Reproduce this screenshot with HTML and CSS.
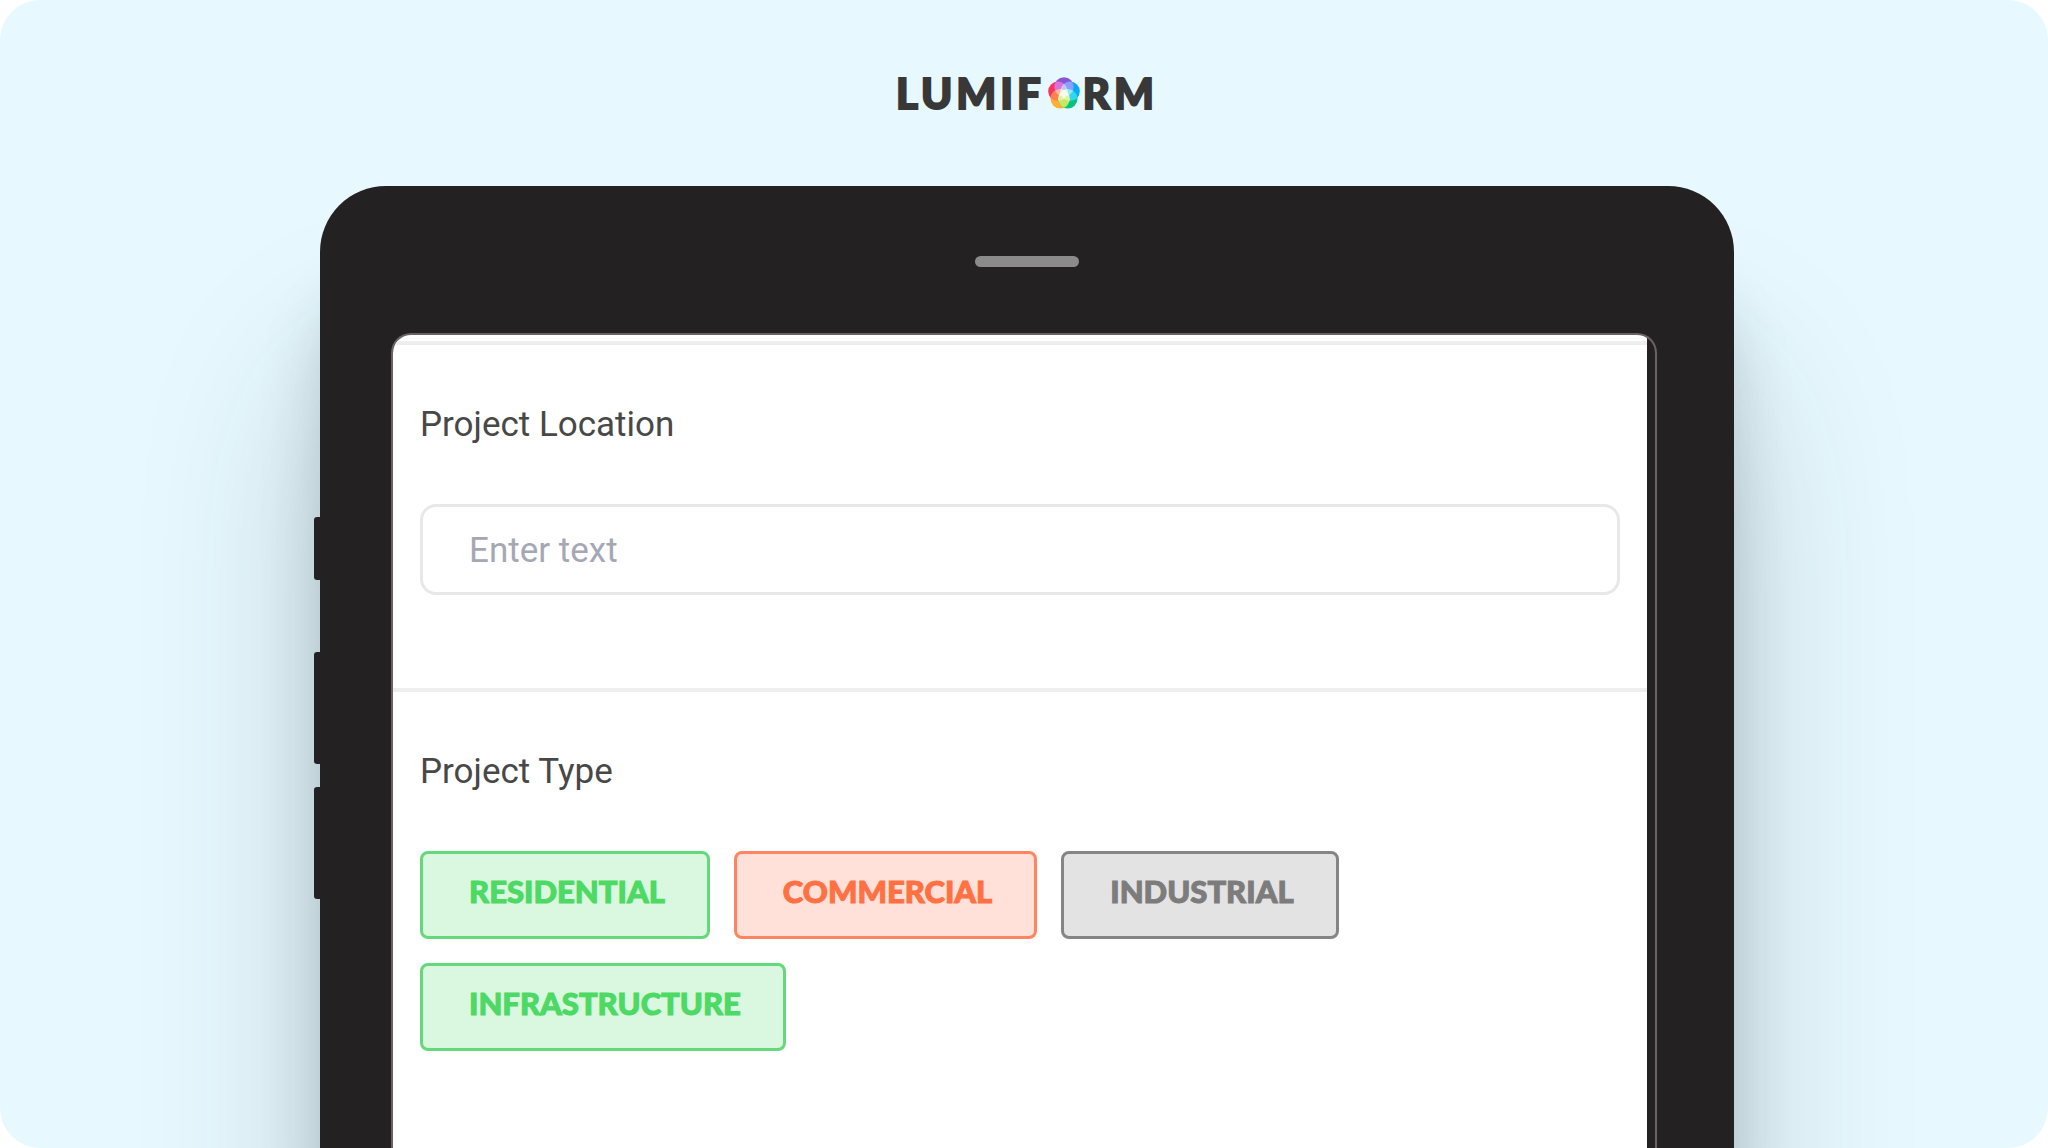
FILE: index.html
```html
<!DOCTYPE html>
<html lang="en">
<head>
<meta charset="utf-8">
<meta name="viewport" content="width=device-width, initial-scale=1">
<title>Lumiform</title>
<link rel="stylesheet" href="styles.css">
</head>
<body>
<div class="stage">
  <header class="brand">
    <span>LUMIF</span>
    <svg class="brand-mark" viewBox="0 0 32 32" aria-label="O" role="img">
      <defs>
        <clipPath id="top"><circle cx="16" cy="9.900" r="9.700"/></clipPath>
        <clipPath id="left"><circle cx="9.900" cy="14.300" r="9.700"/></clipPath>
        <clipPath id="right"><circle cx="22.100" cy="14.300" r="9.700"/></clipPath>
        <clipPath id="low-left"><circle cx="12.200" cy="21.800" r="9.700"/></clipPath>
        <clipPath id="low-right"><circle cx="19.800" cy="21.800" r="9.700"/></clipPath>
      </defs>
      <circle cx="16" cy="9.900" r="9.700" fill="#8a55d0"/>
      <circle cx="9.900" cy="14.300" r="9.700" fill="#f8345f"/>
      <circle cx="22.100" cy="14.300" r="9.700" fill="#05a9fa"/>
      <circle cx="12.200" cy="21.800" r="9.700" fill="#ffae38"/>
      <circle cx="19.800" cy="21.800" r="9.700" fill="#04c484"/>
      <circle cx="16" cy="9.900" r="9.700" fill="#dc70e0" clip-path="url(#left)"/>
      <circle cx="16" cy="9.900" r="9.700" fill="#8c9cff" clip-path="url(#right)"/>
      <circle cx="12.200" cy="21.800" r="9.700" fill="#ff8050" clip-path="url(#left)"/>
      <circle cx="19.800" cy="21.800" r="9.700" fill="#30d8ee" clip-path="url(#right)"/>
      <circle cx="12.200" cy="21.800" r="9.700" fill="#c8e860" clip-path="url(#low-right)"/>
      <g fill="#fff" opacity=".9">
        <circle cx="16" cy="9.900" r="9.700" opacity=".5" clip-path="url(#low-left)"/>
        <circle cx="16" cy="9.900" r="9.700" opacity=".5" clip-path="url(#low-right)"/>
        <circle cx="9.900" cy="14.300" r="9.700" opacity=".5" clip-path="url(#right)"/>
        <circle cx="9.900" cy="14.300" r="9.700" opacity=".5" clip-path="url(#low-right)"/>
        <circle cx="22.100" cy="14.300" r="9.700" opacity=".5" clip-path="url(#low-left)"/>
      </g>
    </svg>
    <span>RM</span>
  </header>

  <div class="device-row">
    <div class="device">
      <i class="key key-short"></i>
      <i class="key key-up"></i>
      <i class="key key-down"></i>
      <div class="speaker"></div>
      <div class="screen">
        <form class="form">
          <section class="field">
            <label class="label" for="location">Project Location</label>
            <input class="text-input" id="location" type="text" placeholder="Enter text">
          </section>
          <section class="field">
            <h2 class="label" id="type-label">Project Type</h2>
            <div class="options" role="group" aria-labelledby="type-label">
              <button type="button" class="option option-green">RESIDENTIAL</button>
              <button type="button" class="option option-orange">COMMERCIAL</button>
              <button type="button" class="option option-gray">INDUSTRIAL</button>
              <button type="button" class="option option-green">INFRASTRUCTURE</button>
            </div>
          </section>
        </form>
      </div>
    </div>
  </div>
</div>
</body>
</html>
```
FILE: styles.css
```css
* { box-sizing: border-box; }

body {
  margin: 0;
  background: #fff;
  font-family: Roboto, "Liberation Sans", sans-serif;
}

.stage {
  display: flex;
  flex-direction: column;
  height: 100vh;
  overflow: hidden;
  border-radius: 40px;
  background: #e7f9ff;
}

.brand {
  display: flex;
  justify-content: center;
  align-items: center;
  gap: 3px;
  padding: 65px 0 65px 6px;
  color: #383838;
  font: 900 42px/56px Lato, sans-serif;
  letter-spacing: 4px;
  -webkit-text-stroke: 2px #383838;
}

.brand-mark { width: 32px; height: 32px; }

.device-row {
  flex: 1;
  display: grid;
  grid-template-columns: 320fr 1414fr 314fr;
}

.device {
  grid-column: 2;
  position: relative;
  display: flex;
  flex-direction: column;
  padding-top: 70px;
  border-radius: 66px 66px 0 0;
  background: #242122;
  box-shadow: 0 190px 180px rgba(35, 45, 50, .22), 0 110px 60px rgba(35, 45, 50, .18);
}

.key {
  position: absolute;
  left: -6px;
  width: 8px;
  height: 112px;
  border-radius: 3px 0 0 3px;
  background: #242122;
}
.key-short { top: 331px; height: 63px; }
.key-up { top: 466px; }
.key-down { top: 601px; }

.speaker {
  align-self: center;
  width: 104px;
  height: 11px;
  border-radius: 6px;
  background: #8b8b8b;
}

.screen {
  flex: 1;
  margin: 66px 77px 0 71px;
  padding-right: 8px;
  border: 2px solid #6b6162;
  border-bottom: 0;
  border-radius: 20px 20px 0 0;
  overflow: hidden;
}

.form {
  height: 100%;
  padding-top: 6px;
  background: #fff;
}

.field {
  padding: 60px 27px 93px;
  border-top: 4px solid #eee;
}

.label {
  display: block;
  margin: 0 0 59px;
  color: #484848;
  font-size: 35px;
  font-weight: 400;
  line-height: 40px;
}

.text-input {
  display: block;
  width: 100%;
  height: 91px;
  padding: 2px 46px 0;
  border: 3px solid #e8e8e8;
  border-radius: 16px;
  background: #fff;
  color: #484848;
  font: 400 35px/40px Roboto, "Liberation Sans", sans-serif;
}
.text-input::placeholder { color: #a5a8b4; opacity: 1; }

.options {
  display: flex;
  flex-wrap: wrap;
  gap: 24px;
}

.option {
  height: 88px;
  padding: 0 42px 8px 46px;
  border: 3px solid;
  border-radius: 8px;
  font: 900 31px/40px Lato, sans-serif;
  -webkit-text-stroke: 1px;
}
.option-green { border-color: #63d97b; background: #daf7df; color: #4cd964; }
.option-orange { border-color: #ff8460; background: #ffe1d9; color: #ff7043; }
.option-gray { border-color: #858585; background: #e3e3e3; color: #7c7c7c; }
```
